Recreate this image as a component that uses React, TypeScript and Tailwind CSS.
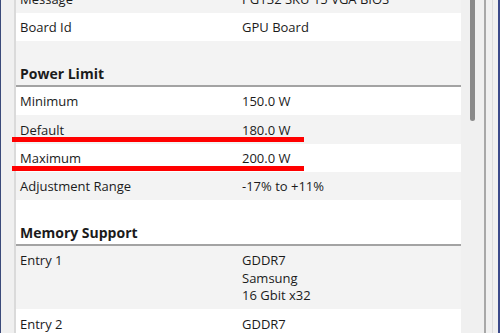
import React from "react";

type Row =
  | { kind: "row"; label: string; value: string[] }
  | { kind: "header"; title: string };

const rows: Row[] = [
  { kind: "row", label: "Message", value: ["PG132 SKU 15 VGA BIOS"] },
  { kind: "row", label: "Board Id", value: ["GPU Board"] },
  { kind: "header", title: "Power Limit" },
  { kind: "row", label: "Minimum", value: ["150.0 W"] },
  { kind: "row", label: "Default", value: ["180.0 W"] },
  { kind: "row", label: "Maximum", value: ["200.0 W"] },
  { kind: "row", label: "Adjustment Range", value: ["-17% to +11%"] },
  { kind: "header", title: "Memory Support" },
  { kind: "row", label: "Entry 1", value: ["GDDR7", "Samsung", "16 Gbit x32"] },
  { kind: "row", label: "Entry 2", value: ["GDDR7", "Micron", "16 Gbit x32"] },
];

export default function App() {
  return (
    <div
      className="relative flex h-[333px] w-[500px] overflow-hidden bg-[#f0f0f0] text-[13px] text-[#1b1b1b]"
      style={{ fontFamily: '"Open Sans", "Noto Sans", sans-serif' }}
    >
      {/* desktop edge + window frame */}
      <div className="w-px shrink-0 bg-[#3b4a7a]" />
      <div className="w-[13px] shrink-0 bg-[#f0f0f0]" />
      <div className="w-[2px] shrink-0 bg-[#dadada]" />

      {/* content list */}
      <div className="w-[445px] shrink-0 overflow-hidden bg-white">
        <div className="-mt-[15.5px]">
          {rows.map((row, i) => {
            const bg = i % 2 === 0 ? "bg-[#f3f3f3]" : "bg-white";
            if (row.kind === "header") {
              return (
                <div
                  key={row.title}
                  className={`flex h-[46px] items-end border-b-2 border-[#a3a3a3] px-[4px] pb-[3px] text-[14px] font-bold leading-[17.5px] ${bg}`}
                >
                  {row.title}
                </div>
              );
            }
            return (
              <div
                key={row.label}
                className={`flex px-[4px] pb-[4.6px] pt-[6.2px] leading-[17.5px] ${bg}`}
              >
                <div className="w-[222px] shrink-0">{row.label}</div>
                <div className="flex flex-col">
                  {row.value.map((v) => (
                    <span key={v}>{v}</span>
                  ))}
                </div>
              </div>
            );
          })}
        </div>
      </div>

      {/* scrollbar */}
      <div className="w-[23px] shrink-0 bg-[#f0f0f0] pl-[9px]">
        <div className="h-[121px] w-[5px] rounded-b-full bg-[#8a8a8a]" />
      </div>
      <div className="w-[2px] shrink-0 bg-[#a8a8a8]" />
      <div className="w-[6px] shrink-0 bg-[#f0f0f0]" />
      <div className="w-px shrink-0 bg-[#dcdcdc]" />
      <div className="w-[5px] shrink-0 bg-[#f0f0f0]" />
      <div className="w-[2px] shrink-0 bg-[#3b4a8a]" />

      {/* red annotation strokes */}
      <div className="absolute left-[12px] top-[137px] h-[5px] w-[292px] bg-[#ff0000]" />
      <div className="absolute left-[12px] top-[166px] h-[5px] w-[292px] bg-[#ff0000]" />
    </div>
  );
}
